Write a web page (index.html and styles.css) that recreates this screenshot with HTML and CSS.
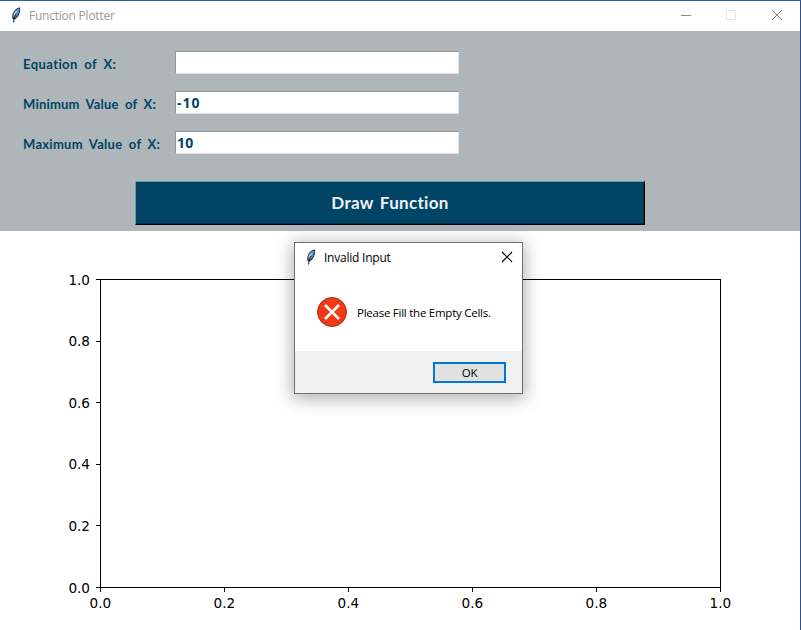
FILE: index.html
```html
<!DOCTYPE html>
<html lang="en">
<head>
<meta charset="utf-8">
<title>Function Plotter</title>
<link rel="stylesheet" href="styles.css">
</head>
<body>
<svg width="0" height="0" class="defs">
  <symbol id="feather" viewBox="0 0 10 16">
    <path d="M1.600 12C.2 7.500 3 1.800 8.800.3 9.900 4.500 8 10 3.600 12.600Z" fill="#1c2632"/>
    <path d="M2.200 10.300C1.900 6.300 4.200 2.600 8.200 1.300 8.700 4.800 7 9 3.500 11.300Z" fill="#5a94dc"/>
    <path d="M3 6.500 6.200 2.700 5 6.800 2.800 9.500Z" fill="#b5cde8"/>
    <path d="M5.200 6.800 3.200 10.800 2.600 15.500" fill="none" stroke="#101820" stroke-width="1"/>
  </symbol>
</svg>
<div class="window">
  <header class="titlebar">
    <svg class="feather"><use href="#feather"/></svg>
    <span class="title">Function Plotter</span>
    <svg class="controls" width="102" height="12" viewBox="0 0 102 12" fill="none" shape-rendering="crispEdges">
      <path d="M0 5.500H10" stroke="#8e8e8e"/>
      <rect x="45.500" y=".5" width="9" height="9" stroke="#e5e5e5"/>
      <path d="M91 0 101 10M101 0 91 10" stroke="#858585" shape-rendering="auto"/>
    </svg>
  </header>
  <main>
    <form class="panel">
      <div class="row"><label for="eq"><span class="equation">Equation of X:</span></label><input id="eq" type="text"></div>
      <div class="row"><label for="min"><span class="minimum">Minimum Value of X:</span></label><input id="min" type="text" value="-10"></div>
      <div class="row"><label for="max"><span class="maximum">Maximum Value of X:</span></label><input id="max" type="text" value="10"></div>
      <button class="draw" type="button">Draw Function</button>
    </form>
    <svg class="plot" width="800" height="399" viewBox="0 231 800 399">
      <g fill="none" stroke="#000" stroke-width="1.100" shape-rendering="crispEdges">
        <rect x="100.500" y="279.500" width="620" height="308"/>
        <path d="M96 279.500h4M96 341.500h4M96 402.500h4M96 464.500h4M96 525.500h4M96 587.500h4"/>
        <path d="M100.500 588v4M224.500 588v4M348.500 588v4M472.500 588v4M596.500 588v4M720.500 588v4"/>
      </g>
      <g class="tick y">
        <text x="90" y="285">1.0</text><text x="90" y="346">0.8</text><text x="90" y="408">0.6</text>
        <text x="90" y="469">0.4</text><text x="90" y="531">0.2</text><text x="90" y="593">0.0</text>
      </g>
      <g class="tick x">
        <text x="100.300" y="608">0.0</text><text x="224.300" y="608">0.2</text><text x="348.300" y="608">0.4</text>
        <text x="472.300" y="608">0.6</text><text x="596.300" y="608">0.8</text><text x="720.300" y="608">1.0</text>
      </g>
    </svg>
  </main>
</div>
<section class="dialog" role="dialog">
  <header class="dialog-title">
    <svg class="feather"><use href="#feather"/></svg>
    <span class="title">Invalid Input</span>
    <svg class="close" width="12" height="12" viewBox="0 0 12 12"><path d="M1 1 11 11M11 1 1 11" stroke="#000" stroke-width="1.100"/></svg>
  </header>
  <div class="message">
    <svg width="32" height="32" viewBox="0 0 32 32">
      <circle cx="16" cy="16" r="14.500" fill="#f03a17" stroke="#a62b16"/>
      <path d="M9 9 23 23M23 9 9 23" stroke="#fff" stroke-width="2.500"/>
    </svg>
    <span>Please Fill the Empty Cells.</span>
  </div>
  <footer><button class="ok" type="button">OK</button></footer>
</section>
</body>
</html>
```
FILE: styles.css
```css
* { box-sizing: border-box; }
body { margin: 0; width: 801px; height: 630px; overflow: hidden; background: #fff; position: relative; font-family: "Open Sans", "Noto Sans", sans-serif; }
.defs { position: absolute; }
.window { height: 630px; border-top: 1px solid #2b639c; border-right: 1px solid #2a4f8c; }
.titlebar { height: 30px; display: flex; align-items: center; padding: 0 18px 0 11px; }
.feather { width: 10px; height: 16px; flex: none; margin-top: -2px; }
.title { font-size: 12px; line-height: 16px; margin-left: 8px; white-space: nowrap; letter-spacing: -.23px; }
.titlebar .title { color: #999; }
.controls { margin-left: auto; margin-right: -1px; }
.panel { height: 200px; margin: 0; padding: 20px 0 0; background: #aeb6b9; display: flex; flex-direction: column; }
.row { display: flex; height: 23px; margin-bottom: 17px; padding-left: 23px; flex: none; }
.row label { width: 152px; color: #004466; font: bold 13px/20px "Comic Sans MS", Lato, sans-serif; padding-top: 3px; white-space: nowrap; }
.equation { letter-spacing: .42px; word-spacing: 3px; }
.minimum { letter-spacing: .2px; word-spacing: 3px; }
.maximum { letter-spacing: .28px; word-spacing: 3px; }
.row input { width: 284px; height: 23px; margin: 0; padding: 0 1px; border: 1px solid; border-color: #969696 #e3e3e3 #e3e3e3 #969696; border-radius: 0; background: #fff; color: #004466; font: bold 14px/20px "Noto Sans", sans-serif; letter-spacing: .3px; outline: 0; }
#min { letter-spacing: 1px; }
.draw { width: 510px; height: 44px; margin: 10px 0 0 135px; padding: 0; border: 1px solid; border-color: #729baa #000 #000 #729baa; box-shadow: inset -1px -1px #002d44; background: #004466; color: #f0f0f0; font: bold 17px/24px "Comic Sans MS", Lato, sans-serif; letter-spacing: .3px; word-spacing: 2px; border-radius: 0; }
.plot { display: block; }
.tick { font: 13.6px "DejaVu Sans", sans-serif; fill: #000; }
.y { text-anchor: end; }
.x { text-anchor: middle; }
.dialog { position: absolute; left: 294px; top: 242px; width: 229px; height: 152px; border: 1px solid #707070; background: #fff; box-shadow: 0 3px 16px 2px rgba(0,0,0,.3); display: flex; flex-direction: column; color: #000; }
.dialog-title { height: 30px; flex: none; display: flex; align-items: center; padding: 0 9px 0 11px; }
.close { margin: -2px 0 0 auto; }
.message { height: 78px; display: flex; align-items: center; padding-left: 21px; font-size: 11.5px; white-space: nowrap; }
.message span { margin: 0 0 0 9px; letter-spacing: -.25px; }
.dialog footer { height: 42px; background: #f0f0f0; display: flex; justify-content: flex-end; padding: 11px 16px 0 0; }
.ok { width: 73px; height: 21px; padding: 1px 0 0; border: 2px solid #0078d7; border-radius: 0; background: #e1e1e1; color: #000; font: 11.5px/16px "Open Sans", sans-serif; letter-spacing: -.2px; }
```
